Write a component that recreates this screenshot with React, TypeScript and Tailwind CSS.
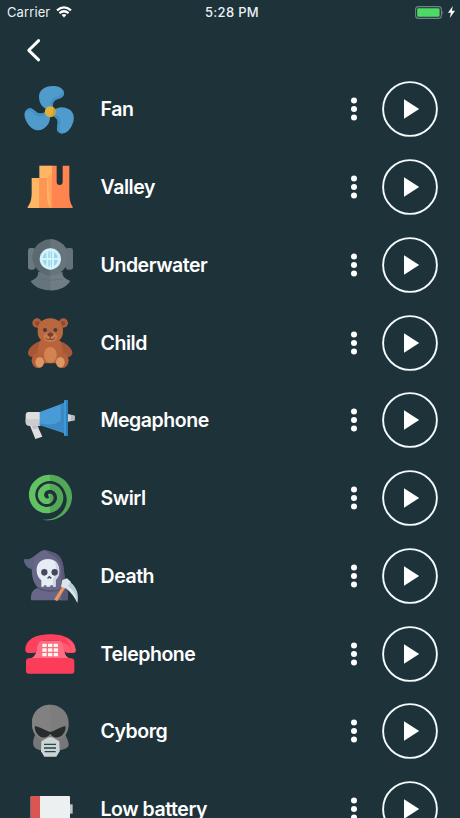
import type { ReactNode } from "react"

function FanIcon() {
  const blade = "M83 92 C66 84 57 72 57 53 C57 34 74 21 98 21 C118 21 132 29 132 43 C132 54 123 57 114 60 C101 64 96 73 99 90 Z"
  const shade = "M127 31 C132 44 122 50 110 53 C98 56 92 62 91 76 L99 90 C96 73 101 64 114 60 C123 57 132 54 132 43 Q131 36 127 31 Z"
  return (
    <>
      {[0, 120, 240].map((angle) => (
        <g key={angle} transform={`rotate(${angle} 91 98)`}>
          <path d={blade} fill="#4f9bcc" />
          <path d={shade} fill="#4290c4" />
        </g>
      ))}
      <circle cx="91" cy="98" r="16.5" fill="#e0b136" />
      <path d="M99 84 A16.5 16.5 0 0 1 88 114 C99 110 103 98 99 84 Z" fill="#c99c2d" />
    </>
  )
}

function ValleyIcon() {
  return (
    <>
      <path d="M58 26 H97 V153 H58 Z" fill="#feb664" />
      <path d="M82 62 L97 50 V153 H90 Z" fill="#fea45c" />
      <path d="M96 26 H110 V75 Q110 84 119 84 Q128 84 128 75 V26 H148 V108 C148 128 152 140 158 149 V153 H95 Z" fill="#ff8450" />
      <path d="M35 63 H59 V153 H23 V149 C32 138 34 128 35 110 Z" fill="#feb664" />
      <path d="M58 63 H81 V112 C81 130 84 143 91 153 H58 Z" fill="#ff9555" />
    </>
  )
}

function UnderwaterIcon() {
  return (
    <>
      <rect x="24" y="39" width="22" height="65" rx="7" fill="#6b7980" />
      <rect x="137" y="39" width="22" height="65" rx="7" fill="#64727a" />
      <path d="M55 110 H127 C128 128 137 131 150 138 C141 155 119 166 91 166 C63 166 40 154 32 138 C45 131 54 128 55 110 Z" fill="#66747b" />
      <path d="M91 116 H126 C128 128 137 131 150 138 C141 155 119 166 91 166 Z" fill="#707d83" />
      <path d="M53 132 Q90 140 130 132" stroke="#5d6b72" strokeWidth="2" fill="none" />
      <circle cx="91" cy="67" r="54" fill="#5b6970" />
      <path d="M91 13 A54 54 0 0 1 91 121 Z" fill="#67747b" />
      <circle cx="91" cy="72" r="32" fill="#cff3fd" />
      <circle cx="91" cy="72" r="23" fill="#9bd5e8" />
      <path d="M82 45 V100 M99 45 V100 M62 72 H120" stroke="#d3f5fe" strokeWidth="6" />
      <path d="M91 40 V104" stroke="#d3f5fe" strokeWidth="3" />
    </>
  )
}

function ChildIcon() {
  return (
    <>
      <circle cx="51" cy="30" r="14" fill="#ad603c" />
      <circle cx="130" cy="30" r="14" fill="#ad603c" />
      <circle cx="52" cy="31" r="7" fill="#914a31" />
      <circle cx="129" cy="31" r="7" fill="#914a31" />
      <path d="M61 84 C43 90 23 106 24 121 C25 132 37 135 47 129 L70 112 Z" fill="#a75735" />
      <path d="M119 84 C137 90 158 106 157 121 C156 132 144 135 134 129 L111 112 Z" fill="#a75735" />
      <path d="M61 82 H119 C130 101 131 130 121 151 H60 C50 128 51 101 61 82 Z" fill="#b9633d" />
      <ellipse cx="91" cy="126" rx="19" ry="24" fill="#d18350" />
      <path d="M53 51 C53 31 67 16 91 16 C114 16 129 31 129 51 C131 79 114 88 91 88 C67 88 51 79 53 51 Z" fill="#b9673f" />
      <ellipse cx="91" cy="72" rx="20" ry="15" fill="#c97c4d" />
      <path d="M81 63 Q91 53 101 63 Q98 72 91 72 Q84 72 81 63 Z" fill="#70402f" />
      <path d="M91 71 V78 M78 74 Q80 83 91 78 Q102 83 104 74" stroke="#70402f" strokeWidth="3" fill="none" />
      <circle cx="75" cy="51" r="6" fill="#473c42" />
      <circle cx="106" cy="51" r="6" fill="#473c42" />
      <ellipse cx="53" cy="142" rx="18" ry="23" fill="#b45f3b" />
      <ellipse cx="128" cy="142" rx="18" ry="23" fill="#b45f3b" />
      <ellipse cx="59" cy="148" rx="13" ry="16" fill="#dc9762" />
      <ellipse cx="121" cy="148" rx="13" ry="16" fill="#dc9762" />
    </>
  )
}

function MegaphoneIcon() {
  return (
    <>
      <path d="M144 72 L164 77 V91 L144 95 Z" fill="#d0d1d5" />
      <path d="M153 74 L164 77 V91 L153 93 Z" fill="#b7b9bf" />
      <path d="M27 100 H49 L67 140 L46 147 Z" fill="#dededf" />
      <path d="M34 106 L52 105 L56 115 L40 117 Z" fill="#bfc0c5" />
      <path d="M25 66 H61 V107 H28 Q17 107 17 96 V77 Q17 66 25 66 Z" fill="#dededd" />
      <path d="M17 88 H61 V107 H28 Q17 107 17 96 Z" fill="#cbcccf" />
      <path d="M59 66 L134 38 V130 L59 105 Z" fill="#479bd7" />
      <path d="M122 42 L134 38 V130 L59 105 V100 Q97 110 122 92 Z" fill="#3b88c4" />
      <rect x="132" y="30" width="12" height="108" rx="4" fill="#4099d6" />
      <path d="M138 30 Q144 30 144 34 V134 Q144 138 138 138 Z" fill="#2e80bd" />
    </>
  )
}

// Archimedean spiral drawn as a filled band that tapers at both ends
function spiralPath(cx: number, cy: number) {
  const outer: string[] = []
  const inner: string[] = []
  const turns = 2.55
  const steps = 120
  for (let i = 0; i <= steps; i++) {
    const t = (i / steps) * turns
    const a = (t - turns) * Math.PI * 2 + Math.PI * 0.58
    const taper = Math.min(1, (turns - t) / 0.33)
    const mid = 1 + (t / turns) * 67 + (1 - taper) * 3
    const w = (5 + Math.min(1, t / 0.7) * 4.3) * taper
    outer.push(`${(cx + (mid + w) * Math.cos(a)).toFixed(1)} ${(cy + (mid + w) * Math.sin(a)).toFixed(1)}`)
    inner.unshift(`${(cx + (mid - w) * Math.cos(a)).toFixed(1)} ${(cy + (mid - w) * Math.sin(a)).toFixed(1)}`)
  }
  return `M${outer.join("L")}L${inner.join("L")}Z`
}

function SwirlIcon() {
  return (
    <>
      <defs>
        <linearGradient id="swirl">
          <stop offset="0.5" stopColor="#62c161" />
          <stop offset="0.5" stopColor="#53a858" />
        </linearGradient>
      </defs>
      <path d={spiralPath(85, 84)} fill="url(#swirl)" transform="matrix(1.03 0 0 1.02 -2.5 -1)" />
    </>
  )
}

function DeathIcon() {
  return (
    <>
      <path d="M12 40 C27 43 36 37 46 28 C57 19 66 12 74 12 C92 16 110 21 119 32 C127 42 130 57 132 74 C133 98 141 110 137 123 C144 130 144 143 143 163 H33 C32 139 39 130 54 125 C38 110 36 89 35 69 C24 64 14 59 12 40 Z" fill="#696788" />
      <path d="M12 40 C27 43 37 36 46 28 L38 70 C22 68 13 56 12 40 Z" fill="#5c6684" />
      <path d="M74 12 C94 18 110 20 119 32 C128 43 130 57 132 74 C133 98 141 110 137 123 C144 130 144 143 143 163 H124 V73 C125 51 113 35 92 25 Z" fill="#595876" />
      <path d="M54 125 C66 136 103 139 128 128" stroke="#56546f" strokeWidth="5" fill="none" />
      <path d="M50 75 C49 51 64 39 84 39 C104 39 118 53 118 75 C118 91 112 97 107 102 V122 H99 V118 H91 V122 H79 V118 H72 V122 H64 V103 C56 96 51 89 50 75 Z" fill="#e5edf5" />
      <path d="M104 44 C115 52 119 66 117 79 C116 90 111 97 107 102 V122 H99 V101 C109 83 110 63 104 44 Z" fill="#cdd8e2" />
      <ellipse cx="73" cy="79" rx="9.5" ry="10" fill="#47485f" />
      <ellipse cx="104" cy="79" rx="9.5" ry="10" fill="#47485f" />
      <path d="M81 96 L88 89 L96 96 L91 98 L88 96 L84 98 Z" fill="#47485f" />
      <path d="M107 163 L134 119" stroke="#ec965c" strokeWidth="10" />
      <path d="M127 102 L141 97 L153 108 L143 129 L123 122 Z" fill="#dbe5ed" />
      <path d="M145 115 C163 119 173 139 172 171 C164 152 153 139 140 128 Z" fill="#dce9ee" />
      <path d="M151 109 C172 125 177 149 172 171 C169 147 160 132 144 121 Z" fill="#bccbd4" />
    </>
  )
}

function TelephoneIcon() {
  return (
    <>
      <path d="M50 77 L63 61 H119 L132 77 C134 93 139 99 151 106 V116 H29 V106 C43 99 48 92 50 77 Z" fill="#ff7186" />
      <path d="M16 78 C17 42 54 31 91 31 C128 31 166 43 167 79 Q168 86 159 86 H142 Q132 86 132 76 L116 50 H67 L50 76 Q51 87 41 87 H25 Q16 86 16 78 Z" fill="#fc405e" />
      <path d="M136 43 Q165 53 167 79 Q168 86 159 86 H142 Q132 86 132 76 L118 53 Q151 57 153 83 Q155 60 136 43 Z" fill="#ff586f" />
      <path d="M63 50 H119 Q129 56 132 77 C134 93 139 99 151 104 H30 C44 98 49 91 50 77 Q53 56 63 50 Z" fill="#ff6d84" />
      <path d="M18 110 C20 102 27 102 35 102 H148 Q163 102 163 111 V141 Q163 149 155 149 H26 Q18 149 18 141 Z" fill="#fb3d5a" />
      {[0, 1, 2].map((row) =>
        [0, 1, 2].map((col) => (
          <rect key={`${row}-${col}`} x={67 + col * 17} y={59 + row * 14} width="13" height="10" rx="1.5" fill="#fff9ef" />
        ))
      )}
    </>
  )
}

function CyborgIcon() {
  return (
    <>
      <path d="M47 91 C44 111 38 114 40 132 C43 144 56 147 66 148 H119 C137 145 146 140 146 130 C144 111 135 109 136 91 Z" fill="#77777a" />
      <path d="M91 11 C61 11 35 33 36 67 C36 92 47 110 66 116 H117 C139 106 147 88 146 65 C146 33 120 11 91 11 Z" fill="#7d7d7e" />
      <path d="M91 11 C61 11 35 33 36 67 C36 92 47 110 66 116 H91 Z" fill="#818181" />
      <path d="M45 75 C66 80 77 90 91 93 C105 90 119 79 136 75 C139 85 133 98 123 106 C109 113 97 108 91 98 C84 109 70 114 58 105 C48 97 43 85 45 75 Z" fill="#282b2b" />
      <path d="M64 121 L86 109 H97 L118 121 L119 151 L109 167 H73 L63 151 Z" fill="#cbd5d5" />
      <path d="M72 130 H108 M72 141 H108 M74 152 H107" stroke="#2b4349" strokeWidth="4" />
    </>
  )
}

function LowBatteryIcon() {
  return (
    <>
      <rect x="148" y="76" width="10" height="28" fill="#bdc3c7" />
      <rect x="32" y="51" width="118" height="78" rx="4" fill="#ecf0f1" />
      <path d="M36 51 H60 V129 H36 Q32 129 32 125 V55 Q32 51 36 51 Z" fill="#dc5551" />
    </>
  )
}

const sounds: { name: string; icon: ReactNode }[] = [
  { name: "Fan", icon: <FanIcon /> },
  { name: "Valley", icon: <ValleyIcon /> },
  { name: "Underwater", icon: <UnderwaterIcon /> },
  { name: "Child", icon: <ChildIcon /> },
  { name: "Megaphone", icon: <MegaphoneIcon /> },
  { name: "Swirl", icon: <SwirlIcon /> },
  { name: "Death", icon: <DeathIcon /> },
  { name: "Telephone", icon: <TelephoneIcon /> },
  { name: "Cyborg", icon: <CyborgIcon /> },
  { name: "Low battery", icon: <LowBatteryIcon /> },
]

function StatusBar() {
  return (
    <div className="grid h-6 shrink-0 grid-cols-3 items-center pl-[7px] pr-[5px] text-[13px] text-[#e9f1f3]">
      <div className="flex items-center gap-1.5">
        <span className="pt-px tracking-[0.1px]">Carrier</span>
        <svg width="16" height="12" viewBox="0 0 16 12" fill="none" stroke="white" strokeWidth="2.2">
          <path d="M1 4.3 Q8 -1.6 15 4.3" />
          <path d="M3.4 7.2 Q8 3.3 12.6 7.2" />
          <path d="M5.6 9 Q8 7 10.4 9 L8 11.5 Z" fill="white" stroke="none" />
        </svg>
      </div>
      <span className="pt-px pl-0.5 text-center font-medium tracking-[0.3px]">5:28 PM</span>
      <div className="flex items-center justify-end gap-1">
        <svg width="29" height="13" viewBox="0 0 29 13">
          <rect x="0.6" y="0.6" width="25.8" height="11.8" rx="3" fill="none" stroke="#718287" strokeWidth="1.1" />
          <rect x="2.2" y="2.2" width="22.4" height="8.6" rx="1.4" fill="#4cd964" />
          <path d="M27.4 4.4 Q29 6.5 27.4 8.6 Z" fill="#718287" />
        </svg>
        <svg width="7" height="12" viewBox="0 0 7 12" fill="white">
          <path d="M4.8 0 L0 6.8 H2.9 L1.8 12 L7 4.8 H3.9 Z" />
        </svg>
      </div>
    </div>
  )
}

function SoundRow({ name, icon }: { name: string; icon: ReactNode }) {
  return (
    <li className="flex h-[77.75px] shrink-0 items-center pl-5 pr-[22px]">
      <svg className="h-[60px] w-[60px] shrink-0" viewBox="0 0 180 180">
        {icon}
      </svg>
      <span className="ml-[20.5px] flex-1 pt-px text-[19.5px] font-semibold tracking-[-0.45px] text-white">{name}</span>
      <button aria-label="More" className="mr-[23px]">
        <svg className="block" width="10" height="24" viewBox="0 0 10 24" fill="white">
          <circle cx="5" cy="3.6" r="3" />
          <circle cx="5" cy="12" r="3" />
          <circle cx="5" cy="20.4" r="3" />
        </svg>
      </button>
      <button aria-label="Play">
        <svg className="block" width="56" height="56" viewBox="0 0 56 56">
          <circle cx="28" cy="28" r="26.9" fill="none" stroke="#f4fbfc" strokeWidth="1.9" />
          <path d="M22 18.2 L37.2 28 L22 37.8 Z" fill="white" />
        </svg>
      </button>
    </li>
  )
}

export default function App() {
  return (
    <div className="flex h-screen flex-col overflow-hidden bg-[#1e323a] font-['Inter',sans-serif]">
      <StatusBar />
      <header className="h-[46.6px] shrink-0 pl-[26px] pt-[14px]">
        <button aria-label="Back" className="block">
          <svg className="block" width="16" height="25" viewBox="0 0 16 25" fill="none" stroke="white" strokeWidth="3" strokeLinecap="round" strokeLinejoin="round">
            <path d="M12.6 2.6 L2.8 12.3 L12.6 21.8" />
          </svg>
        </button>
      </header>
      <ul className="flex flex-col">
        {sounds.map((sound) => (
          <SoundRow key={sound.name} name={sound.name} icon={sound.icon} />
        ))}
      </ul>
    </div>
  )
}
